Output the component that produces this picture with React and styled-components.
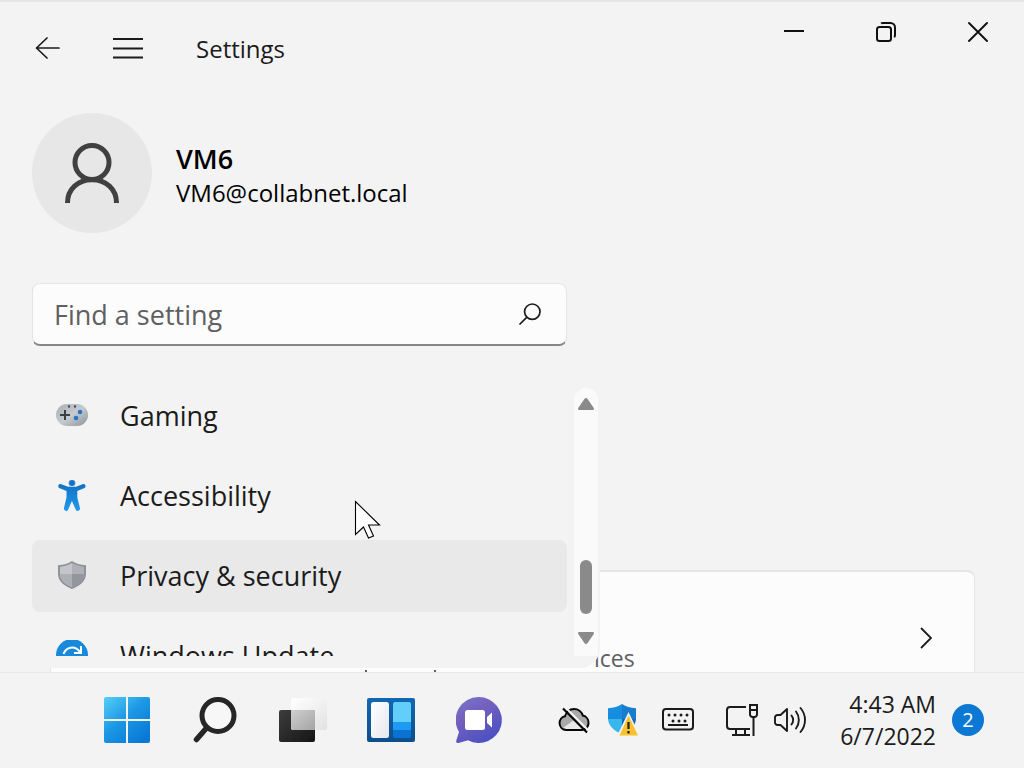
import React from "react";
import styled, { createGlobalStyle } from "styled-components";

const GlobalStyle = createGlobalStyle`
  *, *::before, *::after { box-sizing: border-box; }
  html, body { margin: 0; height: 100%; }
  body {
    background: #f3f3f3;
    color: #1b1b1b;
    font-family: "Open Sans", "Noto Sans", sans-serif;
  }
  #root { height: 100%; }
  button, input { font: inherit; color: inherit; }
  svg { display: block; flex: none; }
`;

const Desktop = styled.div`
  display: flex;
  flex-direction: column;
  min-height: 100vh;
  height: 100%;
  background: #f3f3f3;
  overflow: hidden;
`;

const Window = styled.div`
  flex: 1;
  min-height: 0;
  display: flex;
  flex-direction: column;
  border-top: 2px solid #e6e6e6;
`;

const TitleBar = styled.header`
  display: flex;
  align-items: flex-start;
  height: 94px;
  padding-left: 8px;
`;

const PlainButton = styled.button`
  display: flex;
  align-items: center;
  justify-content: center;
  padding: 0;
  border: 0;
  background: transparent;
`;

const TitleButton = styled(PlainButton)`
  width: 80px;
  height: 92px;
`;

const AppTitle = styled.h1`
  margin: 0;
  padding-left: 28px;
  flex: 1;
  font-size: 24px;
  font-weight: 400;
  line-height: 94px;
`;

const WindowButton = styled(PlainButton)`
  width: 92px;
  height: 60px;
`;

const Body = styled.div`
  position: relative;
  flex: 1;
  min-height: 0;
  display: flex;
`;

const Pane = styled.aside`
  position: absolute;
  top: 0;
  bottom: 4px;
  left: 0;
  z-index: 1;
  width: 600px;
  max-width: 100%;
  display: flex;
  flex-direction: column;
  padding: 17px 2px 12px 32px;
  background: #f3f3f3;
  border-radius: 0 0 20px 0;
`;

const Profile = styled.section`
  display: flex;
  align-items: center;
  gap: 24px;
  margin-bottom: 50px;
`;

const Avatar = styled.div`
  width: 120px;
  height: 120px;
  flex: none;
  border-radius: 50%;
  background: #e7e7e7;
  display: flex;
  align-items: center;
  justify-content: center;
`;

const ProfileText = styled.div`
  padding-top: 4px;
  color: #000;
`;

const UserName = styled.div`
  font-size: 27px;
  font-weight: 600;
  line-height: 36px;
`;

const UserMail = styled.div`
  font-size: 24px;
  line-height: 32px;
`;

const SearchField = styled.label`
  flex: none;
  display: flex;
  align-items: center;
  height: 63px;
  margin-right: 31px;
  margin-bottom: 34px;
  padding: 0 25px 0 21px;
  background: #fcfcfc;
  border: 1px solid #e5e5e5;
  border-bottom: 2px solid #868686;
  border-radius: 8px;
`;

const SearchInput = styled.input`
  flex: 1;
  min-width: 0;
  padding: 0;
  border: 0;
  outline: 0;
  background: transparent;
  font-size: 27px;
  &::placeholder { color: #606060; opacity: 1; }
`;

const NavArea = styled.div`
  flex: 1;
  min-height: 0;
  display: flex;
  justify-content: space-between;
  overflow: hidden;
`;

const NavList = styled.ul`
  flex: 1;
  margin: 0;
  padding: 0;
  list-style: none;
  display: flex;
  flex-direction: column;
  gap: 8px;
`;

const NavLink = styled.a`
  display: flex;
  align-items: center;
  gap: 32px;
  height: 72px;
  padding: 0 24px;
  border-radius: 8px;
  background: ${(p) => (p.$active ? "#e9e9e9" : "transparent")};
  color: #1b1b1b;
  font-size: 27px;
  line-height: 36px;
  text-decoration: none;
`;

const ScrollBar = styled.div`
  width: 24px;
  margin: 8px 0 0 7px;
  padding: 10px 0 12px;
  display: flex;
  flex-direction: column;
  align-items: center;
  background: #fafafa;
  border-radius: 12px 12px 0 0;
`;

const ScrollTrack = styled.div`
  flex: 1;
  display: flex;
  flex-direction: column;
  justify-content: flex-end;
  padding-bottom: 18px;
`;

const ScrollThumb = styled.div`
  width: 12px;
  height: 54px;
  border-radius: 6px;
  background: #8a8a8a;
`;

const Content = styled.main`
  flex: 1;
  display: flex;
  flex-direction: column;
  justify-content: flex-end;
  padding: 0 49px 0 50px;
`;

const Card = styled.a`
  display: flex;
  justify-content: space-between;
  align-items: flex-end;
  height: 102px;
  padding: 0 42px 0 543px;
  background:
    linear-gradient(#5f5f5f, #5f5f5f) 314px 98px / 2px 2px no-repeat,
    linear-gradient(#5f5f5f, #5f5f5f) 383px 98px / 2px 2px no-repeat,
    #fcfcfc;
  border: 1px solid #e5e5e5;
  border-top-width: 2px;
  border-bottom: 0;
  border-radius: 8px 8px 0 0;
  color: #5f5f5f;
  font-size: 23px;
  line-height: 28px;
  text-decoration: none;
`;

const CardChevron = styled.span`
  padding-bottom: 23px;
`;

const Taskbar = styled.footer`
  flex: none;
  display: flex;
  align-items: center;
  height: 96px;
  padding: 0 40px 2px 83px;
  background: #f3f3f3;
  border-top: 1px solid #e8e8e8;
`;

const AppButton = styled(PlainButton)`
  width: 88px;
  height: 88px;
`;

const Tray = styled.div`
  display: flex;
  align-items: center;
  margin-left: auto;
`;

const TrayButton = styled(PlainButton)`
  width: ${(p) => p.$width}px;
  height: 64px;
  gap: 16px;
`;

const Clock = styled(PlainButton)`
  flex-direction: column;
  align-items: flex-end;
  width: 114px;
  margin-right: 16px;
  font-size: 23px;
  line-height: 32px;
  white-space: nowrap;
`;

const Badge = styled(PlainButton)`
  width: 32px;
  height: 32px;
  border-radius: 50%;
  background: #0b78d4;
  color: #fff;
  font-size: 20px;
  line-height: 32px;
`;

const Pointer = styled.svg`
  position: absolute;
  left: 354px;
  top: 404px;
  z-index: 2;
  pointer-events: none;
`;

const BackIcon = () => (
  <svg width="26" height="26" viewBox="0 0 26 26" fill="none" stroke="#1b1b1b" strokeWidth="1.7" strokeLinecap="round" strokeLinejoin="round">
    <path d="M24 13H1.500M12 3 1.500 13 12 23" />
  </svg>
);

const MenuIcon = () => (
  <svg width="30" height="22" viewBox="0 0 30 22" stroke="#1b1b1b" strokeWidth="2">
    <path d="M0 2h30M0 11.5h30M0 20.5h30" />
  </svg>
);

const MinimizeIcon = () => (
  <svg width="20" height="20" viewBox="0 0 20 20" stroke="#111" strokeWidth="2">
    <path d="M0 9h20" />
  </svg>
);

const RestoreIcon = () => (
  <svg width="20" height="20" viewBox="0 0 20 20" fill="none" stroke="#111" strokeWidth="2">
    <rect x="1" y="5" width="14" height="14" rx="2.5" />
    <path d="M5 1.4C5.600 1 6.200 1 7 1h7.500A4.500 4.500 0 0 1 19 5.500V13c0 .8 0 1.500-.8 2.200" />
  </svg>
);

const CloseIcon = () => (
  <svg width="20" height="20" viewBox="0 0 20 20" stroke="#111" strokeWidth="1.900" strokeLinecap="round">
    <path d="m1 1 18 18M19 1 1 19" />
  </svg>
);

const PersonIcon = () => (
  <svg width="54" height="60" viewBox="0 0 54 60" fill="none" stroke="#404040" strokeWidth="5">
    <circle cx="27" cy="19.500" r="17" />
    <path d="M2.500 60C2.500 46 13 36.800 27 36.800S51.500 46 51.500 60" />
  </svg>
);

const FindIcon = () => (
  <svg width="22" height="22" viewBox="0 0 22 22" fill="none" stroke="#1b1b1b" strokeWidth="1.700" strokeLinecap="round">
    <circle cx="13.300" cy="8.700" r="7.700" />
    <path d="M7.700 14.300 1 21" />
  </svg>
);

const GamingIcon = () => (
  <svg width="32" height="32" viewBox="0 0 32 32">
    <defs>
      <linearGradient id="pad" x1="0" y1="0" x2="1" y2="1">
        <stop offset="0" stopColor="#a9adb2" />
        <stop offset=".5" stopColor="#c5cbd0" />
        <stop offset="1" stopColor="#8d9297" />
      </linearGradient>
    </defs>
    <rect y="4" width="32" height="22" rx="11" fill="url(#pad)" />
    <path d="M9 10v10M4 15h10" stroke="#3b4046" strokeWidth="2" />
    <path d="M12 6.500h2M18 6.500h2" stroke="#3b4046" strokeWidth="2" />
    <circle cx="24" cy="12" r="2.300" fill="#2377c9" />
    <circle cx="20" cy="18" r="2.300" fill="#2377c9" />
  </svg>
);

const AccessibilityIcon = () => (
  <svg width="32" height="32" viewBox="0 1 32 32">
    <defs>
      <linearGradient id="body" x1="0" y1="0" x2="0" y2="1">
        <stop offset="0" stopColor="#1173c5" />
        <stop offset="1" stopColor="#2298ec" />
      </linearGradient>
    </defs>
    <path d="M5.300 5.200c-1.200-.5-2.500.1-2.900 1.200-.4 1.200.2 2.300 1.400 2.800l6.700 2.700v6.500L8 28.800c-.4 1.300.2 2.600 1.400 3 1.200.4 2.400-.2 2.800-1.400L15.900 22l3.800 8.400c.4 1.200 1.600 1.800 2.800 1.400 1.200-.4 1.800-1.700 1.400-3l-2.600-10.400v-6.500L28 9.200c1.200-.5 1.800-1.600 1.400-2.800-.4-1.100-1.700-1.700-2.900-1.200L20 7.800h-8z" fill="url(#body)" />
    <circle cx="16" cy="4" r="3.500" fill="#1173c5" stroke="#f3f3f3" strokeWidth=".6" />
  </svg>
);

const ShieldIcon = () => (
  <svg width="32" height="32" viewBox="0 1 32 32">
    <path d="M16 2c4 2.700 8 3.900 14 4.200v8.300C30 22 24 27 16 30 8 27 2 22 2 14.500V6.200C8 5.900 12 4.700 16 2Z" fill="#8d9198" />
    <path d="M16 4c4 2.300 7.500 3.300 12 3.700v7C28 21 23 25.300 16 28Z" fill="#aeb1b7" />
    <path d="M16 4C12 6.300 8.500 7.300 4 7.700v7C4 21 9 25.300 16 28Z" fill="#c3c5c9" />
    <path d="M4 15h12v13C9 25.300 4.500 21 4 15Z" fill="#acafb4" />
    <path d="M28 15H16v13c7-2.700 11.500-7 12-13Z" fill="#93969c" />
  </svg>
);

const UpdateIcon = () => (
  <svg width="32" height="32" viewBox="0 0 32 32" fill="none">
    <circle cx="16" cy="15" r="16" fill="#1989dc" />
    <path d="M7.500 14C10 6.500 19 5.300 24 12M25 6v7h-7M24.500 17.500c-2.500 7.200-11.500 8.700-16.500 2M7 25.500v-6.800h7" stroke="#fff" strokeWidth="2" />
  </svg>
);

const ArrowGlyph = ({ down }) => (
  <svg width="16" height="12" viewBox="0 0 16 12" fill="#8a8a8a">
    {down ? (
      <path d="M1.500 0h13c1.300 0 1.900 1.200 1.100 2.200L9.600 11c-.8 1.200-2.400 1.200-3.200 0L.4 2.200C-.4 1.200.2 0 1.500 0Z" />
    ) : (
      <path d="M1.500 12h13c1.300 0 1.900-1.200 1.100-2.200L9.600 1C8.800-.2 7.200-.2 6.400 1L.4 9.800c-.8 1-.2 2.200 1.100 2.200Z" />
    )}
  </svg>
);

const ChevronIcon = () => (
  <svg width="12" height="22" viewBox="0 0 12 22" fill="none" stroke="#1b1b1b" strokeWidth="1.800">
    <path d="m1 1 10 10L1 21" />
  </svg>
);

const StartIcon = () => (
  <svg width="46" height="46" viewBox="0 0 46 46">
    <defs>
      <linearGradient id="tiles" gradientUnits="userSpaceOnUse" x1="0" y1="0" x2="38" y2="46">
        <stop offset="0" stopColor="#55cff7" />
        <stop offset=".5" stopColor="#1b97e4" />
        <stop offset="1" stopColor="#0877d6" />
      </linearGradient>
    </defs>
    <path d="M2 0h20v22H0V2a2 2 0 0 1 2-2ZM24 0h20a2 2 0 0 1 2 2v20H24ZM0 24h22v22H2a2 2 0 0 1-2-2ZM24 24h22v20a2 2 0 0 1-2 2H24Z" fill="url(#tiles)" />
  </svg>
);

const TaskSearchIcon = () => (
  <svg width="46" height="46" viewBox="0 0 46 46" fill="none" stroke="#262626">
    <circle cx="26" cy="18.500" r="16" strokeWidth="5" fill="#f7f7f7" />
    <path d="M14.500 31 4.500 42.500" strokeWidth="5.500" strokeLinecap="round" />
  </svg>
);

const TaskViewIcon = () => (
  <svg width="48" height="46" viewBox="0 0 48 46">
    <defs>
      <linearGradient id="darkTile" x1="0" y1="0" x2="1" y2="1">
        <stop offset="0" stopColor="#3d3d3d" />
        <stop offset="1" stopColor="#151515" />
      </linearGradient>
      <linearGradient id="lightTile" x1="0" y1="0" x2="1" y2="1">
        <stop offset="0" stopColor="#fff" />
        <stop offset="1" stopColor="#e2e2e2" />
      </linearGradient>
      <linearGradient id="sharedTile" x1="0" y1="0" x2="1" y2="1">
        <stop offset="0" stopColor="#cfcfcf" />
        <stop offset="1" stopColor="#a4a4a4" />
      </linearGradient>
    </defs>
    <rect y="13" width="36" height="32" rx="2" fill="url(#darkTile)" />
    <rect x="12" y="1" width="36" height="32" rx="2" fill="url(#lightTile)" />
    <path d="M12 13h24v20H14a2 2 0 0 1-2-2Z" fill="url(#sharedTile)" />
  </svg>
);

const WidgetsIcon = () => (
  <svg width="48" height="44" viewBox="0 0 48 44">
    <defs>
      <linearGradient id="board" x1="0" y1="0" x2="0" y2="1">
        <stop offset="0" stopColor="#1268b4" />
        <stop offset="1" stopColor="#0c4e8a" />
      </linearGradient>
      <linearGradient id="page" x1="0" y1="0" x2="1" y2="1">
        <stop offset="0" stopColor="#fff" />
        <stop offset="1" stopColor="#e9e6ee" />
      </linearGradient>
    </defs>
    <rect width="48" height="44" rx="2" fill="url(#board)" />
    <rect x="4" y="4" width="18" height="36" rx="2.500" fill="url(#page)" />
    <path d="M26 24V6a2 2 0 0 1 2-2h14a2 2 0 0 1 2 2v18Z" fill="#62cffb" />
    <path d="M26 24h18v8H26Z" fill="#1d9bf4" />
    <path d="M26 32h18v6a2 2 0 0 1-2 2H28a2 2 0 0 1-2-2Z" fill="#0c72d2" />
  </svg>
);

const ChatIcon = () => (
  <svg width="46" height="46" viewBox="0 0 46 46">
    <defs>
      <linearGradient id="bubble" x1="0" y1="0" x2=".6" y2="1">
        <stop offset="0" stopColor="#7a78d0" />
        <stop offset=".4" stopColor="#7561bd" />
        <stop offset="1" stopColor="#4c50c4" />
      </linearGradient>
    </defs>
    <path d="M23 0a23 23 0 1 1-11 43.300L2.500 46C1 46.400-.2 45.200.2 43.700L3 35A23 23 0 0 1 23 0Z" fill="url(#bubble)" />
    <rect x="9" y="13" width="20" height="20" rx="2.500" fill="#fff" />
    <path d="m31 20 5-4.500v15L31 26Z" fill="#fff" />
  </svg>
);

const CloudOffIcon = () => (
  <svg width="32" height="32" viewBox="0 0 32 32" fill="none">
    <path d="M8 26a7 7 0 0 1-1-13.800C8.500 7.500 12 5 16 5c4.500 0 7.800 3 8.800 6.600A7.300 7.300 0 0 1 24 26Z" fill="#a9a9a9" />
    <path d="m5 24 11-8 12 7-3 2H8Z" fill="#e8e8e8" />
    <path d="M8 26a7 7 0 0 1-1-13.800C8.500 7.500 12 5 16 5c4.500 0 7.800 3 8.800 6.600A7.300 7.300 0 0 1 24 26Z" stroke="#050505" strokeWidth="2" />
    <path d="m7 3 24 24" stroke="#f3f3f3" strokeWidth="2" />
    <path d="m5 4.500 24 24" stroke="#050505" strokeWidth="2.200" />
  </svg>
);

const DefenderIcon = () => (
  <svg width="32" height="32" viewBox="0 0 32 32">
    <path d="M16 0c4 2.800 8 4 14 4.200V15H16Z" fill="#177dcf" />
    <path d="M16 0C12 2.800 8 4 2 4.200V15h14Z" fill="#168ddf" />
    <path d="M2 15h14v15C8 27 2.500 22 2 15Z" fill="#39b7ed" />
    <path d="M16 15h14c-.5 7-6 12-14 15Z" fill="#0f67b6" />
    <path d="M22.500 8 34 32H11Z" fill="#f3f3f3" />
    <path d="M22.500 11.500 32 31.500H13.500Z" fill="#fbc02e" />
    <path d="M22.500 18v7M22.500 27v2.500" stroke="#222" strokeWidth="2.200" />
  </svg>
);

const KeyboardIcon = () => (
  <svg width="32" height="32" viewBox="0 0 32 32" fill="none" stroke="#1b1b1b" strokeWidth="2">
    <rect x="1" y="5" width="30" height="20.500" rx="3" />
    <path d="M6 21h20" />
    <g fill="#1b1b1b" stroke="none">
      <circle cx="7" cy="11" r="1.500" />
      <circle cx="13" cy="11" r="1.500" />
      <circle cx="19" cy="11" r="1.500" />
      <circle cx="25" cy="11" r="1.500" />
      <circle cx="11" cy="17" r="1.500" />
      <circle cx="17" cy="17" r="1.500" />
      <circle cx="23" cy="17" r="1.500" />
    </g>
  </svg>
);

const NetworkIcon = () => (
  <svg width="32" height="32" viewBox="0 0 32 32" fill="none" stroke="#1b1b1b" strokeWidth="2">
    <path d="M20 3H4a3 3 0 0 0-3 3v16a3 3 0 0 0 3 3h20M10 25v5.500M19 25v5.500M6 31h18" />
    <path d="M24 1h7v9.500a2.500 2.500 0 0 1-2.500 2.500h-2a2.500 2.500 0 0 1-2.500-2.500ZM23 6h9M27.500 13v19" />
  </svg>
);

const VolumeIcon = () => (
  <svg width="32" height="32" viewBox="0 0 32 32" fill="none" stroke="#1b1b1b" strokeWidth="1.900" strokeLinejoin="round" strokeLinecap="round">
    <path d="M13 5v22l-6.500-6H3.500A2.500 2.500 0 0 1 1 18.500v-5A2.500 2.500 0 0 1 3.500 11h3Z" />
    <path d="M17.500 11.500c2 2.700 2 6.300 0 9M22 7.500c3.800 5 3.800 12 0 17M26.500 4c6 7 6 17 0 24" />
  </svg>
);

const NAV_ITEMS = [
  { label: "Gaming", Icon: GamingIcon },
  { label: "Accessibility", Icon: AccessibilityIcon },
  { label: "Privacy & security", Icon: ShieldIcon, active: true },
  { label: "Windows Update", Icon: UpdateIcon },
];

const APPS = [
  { id: "start", Icon: StartIcon },
  { id: "search", Icon: TaskSearchIcon },
  { id: "task-view", Icon: TaskViewIcon },
  { id: "widgets", Icon: WidgetsIcon },
  { id: "chat", Icon: ChatIcon },
];

export default function App() {
  return (
    <Desktop>
      <GlobalStyle />
      <Window>
        <TitleBar>
          <TitleButton type="button"><BackIcon /></TitleButton>
          <TitleButton type="button"><MenuIcon /></TitleButton>
          <AppTitle>Settings</AppTitle>
          <WindowButton type="button"><MinimizeIcon /></WindowButton>
          <WindowButton type="button"><RestoreIcon /></WindowButton>
          <WindowButton type="button"><CloseIcon /></WindowButton>
        </TitleBar>
        <Body>
          <Pane>
            <Profile>
              <Avatar><PersonIcon /></Avatar>
              <ProfileText>
                <UserName>VM6</UserName>
                <UserMail>VM6@collabnet.local</UserMail>
              </ProfileText>
            </Profile>
            <SearchField>
              <SearchInput type="text" placeholder="Find a setting" />
              <FindIcon />
            </SearchField>
            <NavArea>
              <NavList>
                {NAV_ITEMS.map(({ label, Icon, active }) => (
                  <li key={label}>
                    <NavLink href="#" $active={active}>
                      <Icon />
                      {label}
                    </NavLink>
                  </li>
                ))}
              </NavList>
              <ScrollBar>
                <ArrowGlyph />
                <ScrollTrack><ScrollThumb /></ScrollTrack>
                <ArrowGlyph down />
              </ScrollBar>
            </NavArea>
          </Pane>
          <Content>
            <Card href="#">
              ices
              <CardChevron><ChevronIcon /></CardChevron>
            </Card>
          </Content>
          <Pointer width="27" height="40" viewBox="0 0 27 40">
            <path d="M1.500 1.500v33l8-7.500 5 11 5-2-5-11h11Z" fill="#fff" stroke="#000" strokeWidth="1.100" />
          </Pointer>
        </Body>
      </Window>
      <Taskbar>
        {APPS.map(({ id, Icon }) => (
          <AppButton key={id} type="button"><Icon /></AppButton>
        ))}
        <Tray>
          <TrayButton type="button" $width={48}><CloudOffIcon /></TrayButton>
          <TrayButton type="button" $width={48}><DefenderIcon /></TrayButton>
          <TrayButton type="button" $width={64}><KeyboardIcon /></TrayButton>
          <TrayButton type="button" $width={112}><NetworkIcon /><VolumeIcon /></TrayButton>
          <Clock type="button">
            <span>4:43 AM</span>
            <span>6/7/2022</span>
          </Clock>
          <Badge type="button">2</Badge>
        </Tray>
      </Taskbar>
    </Desktop>
  );
}
